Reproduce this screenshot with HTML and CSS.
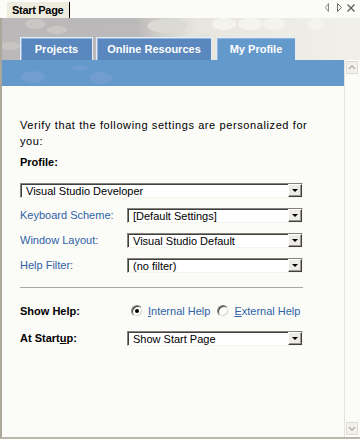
FILE: index.html
```html
<!DOCTYPE html>
<html>
<head>
<meta charset="utf-8">
<title>Start Page</title>
<link rel="stylesheet" href="styles.css">
</head>
<body>
<div class="strip">
  <div class="doctab">Start Page</div>
  <svg class="strip-icons" width="36" height="12" viewBox="0 0 36 12">
    <polygon points="6.5,1.5 3.5,5.5 6.5,9.5" fill="none" stroke="#8d8a80" stroke-width="1"/>
    <polygon points="15.5,1.5 19.5,5.5 15.5,9.5" fill="none" stroke="#6f6c62" stroke-width="1"/>
    <line x1="25.5" y1="2.5" x2="32.5" y2="9.5" stroke="#6a675e" stroke-width="1.4"/>
    <line x1="32.5" y1="2.5" x2="25.5" y2="9.5" stroke="#6a675e" stroke-width="1.4"/>
  </svg>
</div>
<div class="panel">
  <div class="hero">
    <div class="tab tab-projects">Projects</div>
    <div class="tab tab-online">Online Resources</div>
    <div class="tab tab-profile">My Profile</div>
  </div>
  <div class="body">
    <div class="content">
      <div class="band"></div>
      <div class="form">
        <p class="intro">Verify that the following settings are personalized for you:</p>
        <div class="profile-label">Profile:</div>
        <div class="combo combo-profile"><span class="combo-text">Visual Studio Developer</span><span class="combo-btn"></span></div>
        <div class="fields">
          <span class="link-label">Keyboard Scheme:</span>
          <div class="combo"><span class="combo-text">[Default Settings]</span><span class="combo-btn"></span></div>
          <span class="link-label">Window Layout:</span>
          <div class="combo"><span class="combo-text">Visual Studio Default</span><span class="combo-btn"></span></div>
          <span class="link-label">Help Filter:</span>
          <div class="combo"><span class="combo-text">(no filter)</span><span class="combo-btn"></span></div>
        </div>
        <hr class="sep">
        <div class="options">
          <span class="bold-label">Show Help:</span>
          <div class="radios">
            <span class="radio checked"></span><span class="radio-text"><u>I</u>nternal Help</span>
            <span class="radio second"></span><span class="radio-text"><u>E</u>xternal Help</span>
          </div>
          <span class="bold-label">At Start<u>u</u>p:</span>
          <div class="combo"><span class="combo-text">Show Start Page</span><span class="combo-btn"></span></div>
        </div>
      </div>
    </div>
    <div class="scrollbar">
      <div class="sb-btn"><svg width="10" height="11" viewBox="0 0 10 11"><polyline points="2,7 5,4 8,7" fill="none" stroke="#b9b7ae" stroke-width="1.6"/></svg></div>
      <div class="sb-btn"><svg width="10" height="11" viewBox="0 0 10 11"><polyline points="2,4 5,7 8,4" fill="none" stroke="#b9b7ae" stroke-width="1.6"/></svg></div>
    </div>
  </div>
</div>
</body>
</html>
```

FILE: styles.css
```css
html, body {
  margin: 0;
  padding: 0;
}

body {
  width: 360px;
  height: 439px;
  overflow: hidden;
  display: flex;
  flex-direction: column;
  background: #fbfbf7;
  font-family: "Liberation Sans", Arial, sans-serif;
  font-size: 11px;
  color: #000;
}

.strip {
  height: 18px;
  flex: none;
  display: flex;
  align-items: flex-end;
  padding-left: 7px;
  background: #fbfbf7;
}

.doctab {
  width: 63px;
  height: 16px;
  box-sizing: border-box;
  padding-left: 5px;
  background: #eeecdf;
  border-right: 1px solid #000;
  font-weight: bold;
  letter-spacing: -0.3px;
  line-height: 16px;
  white-space: nowrap;
}

.strip-icons {
  margin-left: auto;
  margin-right: 2px;
  align-self: flex-start;
  margin-top: 2px;
}

.panel {
  flex: 1;
  display: flex;
  flex-direction: column;
  border-left: 2px solid #aba89b;
  border-bottom: 2px solid #b9b6aa;
  background: #fbfbf8;
  min-height: 0;
}

.hero {
  height: 42px;
  flex: none;
  display: flex;
  align-items: flex-end;
  gap: 3px;
  padding-left: 18px;
  background:
    radial-gradient(ellipse 10px 5px at 33px 6px, #c8c7c3 97%, rgba(0,0,0,0) 100%),
    radial-gradient(ellipse 10px 4px at 55px 12px, #c8c7c3 97%, rgba(0,0,0,0) 100%),
    radial-gradient(ellipse 10px 4px at 8px 28px, #c6c5c1 97%, rgba(0,0,0,0) 100%),
    radial-gradient(ellipse 20px 7px at 165px 8px, #dad9d3 97%, rgba(0,0,0,0) 100%),
    radial-gradient(ellipse 12px 6px at 222px 6px, #f4f3ee 97%, rgba(0,0,0,0) 100%),
    radial-gradient(ellipse 12px 6px at 248px 6px, #f4f3ee 97%, rgba(0,0,0,0) 100%),
    radial-gradient(ellipse 11px 6px at 272px 6px, #f4f3ee 97%, rgba(0,0,0,0) 100%),
    radial-gradient(ellipse 8px 6px at 314px 6px, #f4f3ee 97%, rgba(0,0,0,0) 100%),
    radial-gradient(ellipse 14px 4px at 195px 19px, #e4e3dd 97%, rgba(0,0,0,0) 100%),
    linear-gradient(to right, #bbb8ba 0, #bcb9ba 135px, #d3d1cc 160px, #e7e5de 195px, #ecebe3 260px, #f1f0e9 100%);
}

.tab {
  height: 23px;
  box-sizing: border-box;
  display: flex;
  align-items: center;
  justify-content: center;
  border: 1px solid #e4ecf6;
  border-bottom: none;
  box-shadow: inset 1px 1px 0 #93b4de;
  background: #5a87bd;
  color: #fff;
  font-weight: bold;
  white-space: nowrap;
}

.tab-projects {
  width: 73px;
}

.tab-online {
  width: 116px;
  margin-right: 1px;
}

.tab-profile {
  width: 80px;
  background: #6499cc;
}

.body {
  flex: 1;
  display: flex;
  min-height: 0;
}

.content {
  flex: 1;
  display: flex;
  flex-direction: column;
}

.band {
  height: 26px;
  flex: none;
  background:
    radial-gradient(ellipse 12px 6px at 31px 17px, #729dd0 96%, rgba(0,0,0,0) 100%),
    radial-gradient(ellipse 10px 2px at 78px 8px, #729dd0 96%, rgba(0,0,0,0) 100%),
    radial-gradient(ellipse 11px 6px at 99px 18px, #729dd0 96%, rgba(0,0,0,0) 100%),
    #6399cb;
}

.form {
  padding: 31px 0 0 18px;
}

.intro {
  margin: 0;
  width: 300px;
  line-height: 16px;
  letter-spacing: 0.6px;
}

.profile-label,
.bold-label {
  font-weight: bold;
  line-height: 16px;
}

.profile-label {
  margin-top: 5px;
}

.combo {
  height: 15px;
  box-sizing: border-box;
  display: flex;
  background: #fff;
  border: 1px solid;
  border-color: #858379 #f4f3ee #f4f3ee #858379;
  box-shadow: inset 1px 1px 0 #404040;
}

.combo-profile {
  width: 283px;
  margin-top: 13px;
}

.combo-text {
  flex: 1;
  padding-left: 5px;
  line-height: 14px;
  white-space: nowrap;
  overflow: hidden;
}

.combo-btn {
  width: 14px;
  box-sizing: border-box;
  display: flex;
  align-items: center;
  justify-content: center;
  background: #ecebe5;
  border: 1px solid;
  border-color: #fff #404040 #404040 #fff;
  box-shadow: inset -1px -1px 0 #9a988f;
}

.combo-btn::after {
  content: "";
  width: 0;
  height: 0;
  border-left: 3px solid transparent;
  border-right: 3px solid transparent;
  border-top: 3px solid #000;
}

.fields {
  display: grid;
  grid-template-columns: 107px 176px;
  row-gap: 10px;
  align-items: center;
  margin-top: 10px;
}

.link-label {
  color: #2f62a6;
  line-height: 15px;
}

.sep {
  width: 283px;
  height: 1px;
  border: 0;
  margin: 14px 0 0 0;
  background: #a9a8a2;
}

.options {
  display: grid;
  grid-template-columns: 107px 176px;
  row-gap: 11px;
  align-items: center;
  margin-top: 15px;
}

.radios {
  display: flex;
  align-items: center;
  padding-left: 4px;
  height: 15px;
  white-space: nowrap;
}

.radio {
  width: 12px;
  height: 12px;
  box-sizing: border-box;
  border-radius: 50%;
  background: #fff;
  border: 1px solid;
  border-color: #858379 #f4f3ee #f4f3ee #858379;
  box-shadow: inset 1px 1px 0 #404040, inset -1px -1px 0 #d8d6cd;
  display: flex;
  align-items: center;
  justify-content: center;
  margin-right: 5px;
  flex: none;
}

.radio.checked::after {
  content: "";
  width: 4px;
  height: 4px;
  border-radius: 50%;
  background: #000;
}

.radio.second {
  margin-left: 7px;
}

.radio-text {
  color: #2f62a6;
}

.scrollbar {
  width: 16px;
  box-sizing: border-box;
  flex: none;
  display: flex;
  flex-direction: column;
  justify-content: space-between;
  border-left: 1px solid #e4e3dd;
  padding: 1px 2px 2px 1px;
}

.sb-btn {
  width: 12px;
  height: 13px;
  box-sizing: border-box;
  display: flex;
  align-items: center;
  justify-content: center;
  background: #f2f1eb;
  border: 1px solid #dddbd2;
}
```
